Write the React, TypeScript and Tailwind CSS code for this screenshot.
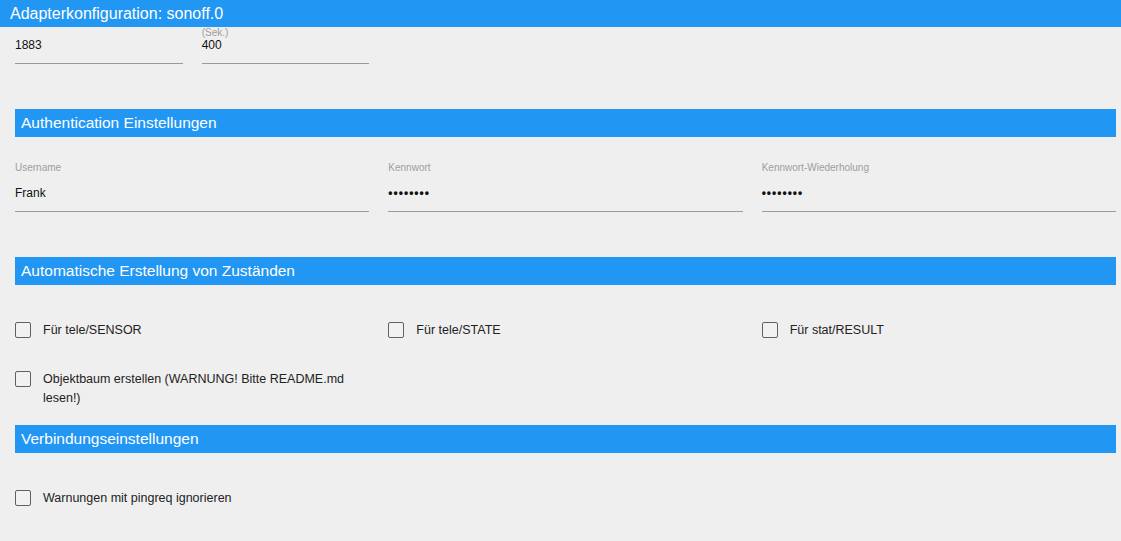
import React from "react";

// --- Types ---
interface FieldProps {
  label?: string;
  value: string;
  secret?: boolean;
  labelGap?: string;
}

interface CheckProps {
  label: string;
}

const font = { fontFamily: '"Liberation Sans", Arial, sans-serif' };

function SectionBar({ title }: { title: string }) {
  return (
    <div className="h-[28px] bg-[#2196f3] flex items-center px-[6px]">
      <span className="text-white text-[15.5px] leading-none">{title}</span>
    </div>
  );
}

function Field({ label, value, secret, labelGap = "mt-[12px]" }: FieldProps) {
  return (
    <div className="flex flex-col">
      <div className="h-[12px] text-[10px] leading-[12px] text-[#9e9e9e] whitespace-nowrap">{label ?? ""}</div>
      <div
        className={`${labelGap} text-[12px] leading-[14px] text-[#111] pb-[11px] border-b border-[#9a9a9a] ${
          secret ? "tracking-[1px] font-bold" : ""
        }`}
      >
        {secret ? "••••••••" : value}
      </div>
    </div>
  );
}

function Check({ label }: CheckProps) {
  return (
    <label className="flex items-start gap-[12px] text-[12.5px] leading-[19px] text-[#222]">
      <span className="mt-[1px] w-[16px] h-[16px] shrink-0 rounded-[2px] border border-[#616161] bg-[#f1f1f1]" />
      <span className="pr-[10px]">{label}</span>
    </label>
  );
}

export default function App() {
  return (
    <div className="w-[1121px] h-[541px] overflow-hidden bg-[#efefef]" style={font}>
      {/* header */}
      <div className="h-[27px] bg-[#2196f3] flex items-center px-[10px]">
        <span className="text-white text-[16px] leading-none">Adapterkonfiguration: sonoff.0</span>
      </div>

      <div className="px-[15px] pr-[5px]">
        {/* MQTT port + timeout */}
        <div className="grid grid-cols-6 gap-x-[19px]">
          <Field value="1883" labelGap="mt-[-1px]" />
          <Field label="(Sek.)" value="400" labelGap="mt-[-1px]" />
        </div>

        <div className="mt-[45px]">
          <SectionBar title="Authentication Einstellungen" />
        </div>
        <div className="mt-[25px] grid grid-cols-3 gap-x-[19px]">
          <Field label="Username" value="Frank" />
          <Field label="Kennwort" value="" secret />
          <Field label="Kennwort-Wiederholung" value="" secret />
        </div>

        <div className="mt-[45px]">
          <SectionBar title="Automatische Erstellung von Zuständen" />
        </div>
        <div className="mt-[36px] grid grid-cols-3 gap-x-[19px] gap-y-[30px]">
          <Check label="Für tele/SENSOR" />
          <Check label="Für tele/STATE" />
          <Check label="Für stat/RESULT" />
          <Check label="Objektbaum erstellen (WARNUNG! Bitte README.md lesen!)" />
        </div>

        <div className="mt-[17px]">
          <SectionBar title="Verbindungseinstellungen" />
        </div>
        <div className="mt-[36px] grid grid-cols-3 gap-x-[19px]">
          <Check label="Warnungen mit pingreq ignorieren" />
        </div>
      </div>
    </div>
  );
}
